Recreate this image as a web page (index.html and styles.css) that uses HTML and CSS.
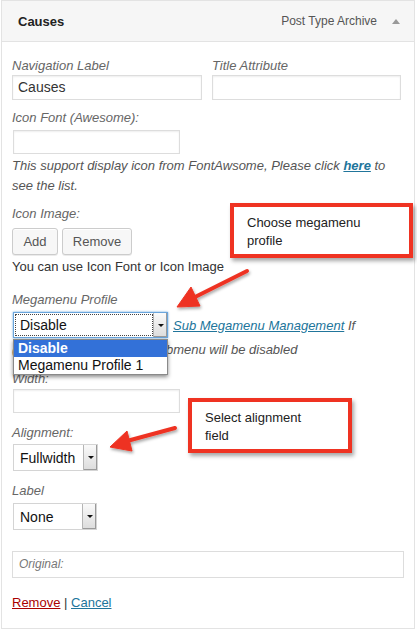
FILE: index.html
```html
<!DOCTYPE html>
<html>
<head>
<meta charset="utf-8">
<link rel="stylesheet" href="styles.css">
</head>
<body>
<div class="page">
  <div class="panel">
    <div class="header">
      <span class="title">Causes</span>
      <span class="type">Post Type Archive</span>
      <span class="toggle"></span>
    </div>
    <div class="content">
      <div class="two-cols">
        <div>
          <div class="lbl">Navigation Label</div>
          <div class="input">Causes</div>
        </div>
        <div>
          <div class="lbl">Title Attribute</div>
          <div class="input"></div>
        </div>
      </div>

      <div class="lbl lbl-icon-font">Icon Font (Awesome):</div>
      <div class="input input-small"></div>
      <p class="help">This support display icon from FontAwsome, Please click <a class="here" href="#">here</a> to see the list.</p>

      <div class="lbl lbl-icon-image">Icon Image:</div>
      <div class="buttons">
        <span class="btn btn-add">Add</span>
        <span class="btn btn-remove">Remove</span>
      </div>
      <div class="note">You can use Icon Font or Icon Image</div>

      <div class="lbl lbl-mega">Megamenu Profile</div>
      <div class="mega-row">
        <div class="select select-focus">
          <span class="sel-text"><span class="focus-ring">Disable</span></span>
          <span class="sel-btn"><span class="tri"></span></span>
          <div class="dropdown">
            <div class="opt opt-active">Disable</div>
            <div class="opt">Megamenu Profile 1</div>
          </div>
        </div>
        <span class="mega-link"><a href="#">Sub Megamenu Management</a> If</span>
      </div>
      <div class="mega-note">(If choose Disable, then submenu will be disabled</div>

      <div class="lbl lbl-width">Width:</div>
      <div class="input input-small"></div>

      <div class="lbl lbl-align">Alignment:</div>
      <div class="select select-small select-align">
        <span class="sel-text">Fullwidth</span>
        <span class="sel-btn"><span class="tri"></span></span>
      </div>

      <div class="lbl lbl-label">Label</div>
      <div class="select select-small select-label">
        <span class="sel-text">None</span>
        <span class="sel-btn"><span class="tri"></span></span>
      </div>

      <div class="original">Original:</div>

      <div class="actions"><a class="remove" href="#">Remove</a> | <a class="cancel" href="#">Cancel</a></div>
    </div>
  </div>

  <div class="callout callout-1">Choose megamenu<br>profile</div>
  <div class="callout callout-2">Select alignment<br>field</div>

  <svg class="arrows" width="417" height="633" viewBox="0 0 417 633">
    <defs>
      <filter id="sh" x="-20%" y="-20%" width="140%" height="140%">
        <feDropShadow dx="1" dy="2" stdDeviation="1.5" flood-color="#000" flood-opacity="0.35"/>
      </filter>
    </defs>
    <g filter="url(#sh)" fill="#ee3322" stroke="#ee3322">
      <line x1="247" y1="271" x2="193" y2="298" stroke-width="4" stroke-linecap="round"/>
      <polygon points="177,307 200,306 191,287" stroke-width="1" stroke-linejoin="round"/>
      <line x1="175" y1="428" x2="127" y2="441" stroke-width="4" stroke-linecap="round"/>
      <polygon points="110,447 132,451 127,431" stroke-width="1" stroke-linejoin="round"/>
    </g>
  </svg>
</div>
</body>
</html>
```

FILE: styles.css
```css
* { box-sizing: border-box; }

html, body {
  margin: 0;
  padding: 0;
  background: #fff;
}

body {
  font-family: "Liberation Sans", Arial, Helvetica, sans-serif;
  font-size: 13px;
  color: #333;
}

.page {
  position: relative;
  width: 417px;
  height: 633px;
  overflow: hidden;
}

.panel {
  margin-left: 1px;
  width: 414px;
  border: 1px solid #e3e3e3;
}

.header {
  height: 41px;
  background: #f6f6f6;
  border-bottom: 1px solid #e3e3e3;
  display: flex;
  align-items: center;
  padding: 0 14px 0 16px;
}

.title {
  font-weight: bold;
  font-size: 13px;
  color: #222;
  flex: 1;
}

.type {
  font-size: 12px;
  color: #555;
}

.toggle {
  margin-left: 15px;
  width: 0;
  height: 0;
  border-left: 4px solid transparent;
  border-right: 4px solid transparent;
  border-bottom: 5px solid #999;
}

.content {
  padding: 15px 10px 16px 10px;
}

.lbl {
  font-style: italic;
  color: #666;
  line-height: 18px;
  height: 18px;
}

.two-cols {
  display: grid;
  grid-template-columns: 190px 189px;
  column-gap: 10px;
}

.input {
  height: 25px;
  border: 1px solid #dddddd;
  box-shadow: inset 0 1px 2px rgba(0,0,0,0.07);
  background: #fff;
  font-size: 14px;
  color: #333;
  line-height: 23px;
  padding-left: 5px;
}

.input-small {
  margin-left: 1px;
  width: 167px;
  height: 24px;
}

.lbl-icon-font { margin-top: 9px; margin-bottom: 3px; }

.help {
  margin: 2px 0 0 0;
  font-style: italic;
  color: #555;
  line-height: 20px;
  width: 392px;
}

.here {
  color: #21759b;
  font-weight: bold;
  text-decoration: underline;
}

.lbl-icon-image { margin-top: 9px; margin-bottom: 5px; }

.buttons {
  display: flex;
  gap: 4px;
}

.btn {
  display: flex;
  align-items: center;
  justify-content: center;
  height: 27px;
  border: 1px solid #cccccc;
  border-radius: 3px;
  background: #f7f7f7;
  box-shadow: inset 0 1px 0 #fff, 0 1px 0 rgba(0,0,0,0.08);
  color: #555;
  font-size: 13px;
}

.btn-add { width: 46px; }
.btn-remove { width: 70px; }

.note {
  margin-top: 3px;
  line-height: 18px;
  color: #333;
}

.lbl-mega { margin-top: 15px; margin-bottom: 3px; }

.mega-row {
  display: flex;
  align-items: center;
  height: 26px;
}

.select {
  position: relative;
  display: flex;
  margin-left: 1px;
  height: 27px;
  background: #fff;
  border: 1px solid #d4d4d4;
  font-size: 14px;
  color: #111;
}

.select-focus {
  width: 155px;
  height: 26px;
  border-color: #6aa5dc;
  box-shadow: 0 0 2px rgba(60,140,210,0.8);
}

.sel-text {
  flex: 1;
  display: flex;
  align-items: center;
  padding-left: 6px;
}

.select-focus .sel-text {
  padding: 1px 0 1px 1px;
}

.focus-ring {
  display: flex;
  align-items: center;
  width: 100%;
  height: 100%;
  border: 1px dotted #444;
  padding-left: 4px;
}

.sel-btn {
  width: 14px;
  display: flex;
  align-items: center;
  justify-content: center;
  background: linear-gradient(#fafafa, #dcdcdc);
  border-left: 1px solid #b5b5b5;
  box-shadow: inset -1px -1px 0 #9a9a9a;
}

.tri {
  width: 0;
  height: 0;
  border-left: 3px solid transparent;
  border-right: 3px solid transparent;
  border-top: 3px solid #111;
}

.dropdown {
  position: absolute;
  left: -1px;
  top: 26px;
  width: 155px;
  background: #fff;
  border: 1px solid #8a8a8a;
  box-shadow: 0 2px 4px rgba(0,0,0,0.45);
  z-index: 2;
}

.opt {
  height: 17px;
  line-height: 17px;
  padding-left: 4px;
  font-size: 14px;
  color: #111;
}

.opt-active {
  background: #3371d8;
  color: #fff;
  font-weight: bold;
}

.mega-link {
  margin-left: 5px;
  font-style: italic;
  color: #555;
  font-size: 13px;
}

.mega-link a {
  color: #21759b;
  text-decoration: underline;
}

.mega-note {
  margin-top: 2px;
  font-style: italic;
  color: #555;
  line-height: 20px;
}

.lbl-width { margin-top: 10px; margin-bottom: 1px; }

.lbl-align { margin-top: 11px; margin-bottom: 2px; }

.select-small {
  width: 85px;
}

.select-label {
  width: 84px;
}

.lbl-label { margin-top: 11px; margin-bottom: 3px; }

.original {
  margin-top: 21px;
  height: 27px;
  border: 1px solid #dddddd;
  font-style: italic;
  color: #777;
  font-size: 12px;
  line-height: 25px;
  padding-left: 6px;
}

.actions {
  margin-top: 16px;
  line-height: 18px;
  color: #333;
}

.remove {
  color: #a00;
  text-decoration: underline;
}

.cancel {
  color: #21759b;
  text-decoration: underline;
}

.callout {
  position: absolute;
  background: #fff;
  border: 4px solid #ef3322;
  box-shadow: 2px 3px 4px rgba(0,0,0,0.35);
  color: #222;
  font-size: 13px;
  line-height: 18px;
  z-index: 3;
}

.callout-1 {
  left: 230px;
  top: 203px;
  width: 183px;
  height: 55px;
  padding: 7px 0 0 13px;
}

.callout-2 {
  left: 188px;
  top: 398px;
  width: 164px;
  height: 55px;
  padding: 7px 0 0 13px;
}

.arrows {
  position: absolute;
  left: 0;
  top: 0;
  z-index: 4;
  pointer-events: none;
}
```
